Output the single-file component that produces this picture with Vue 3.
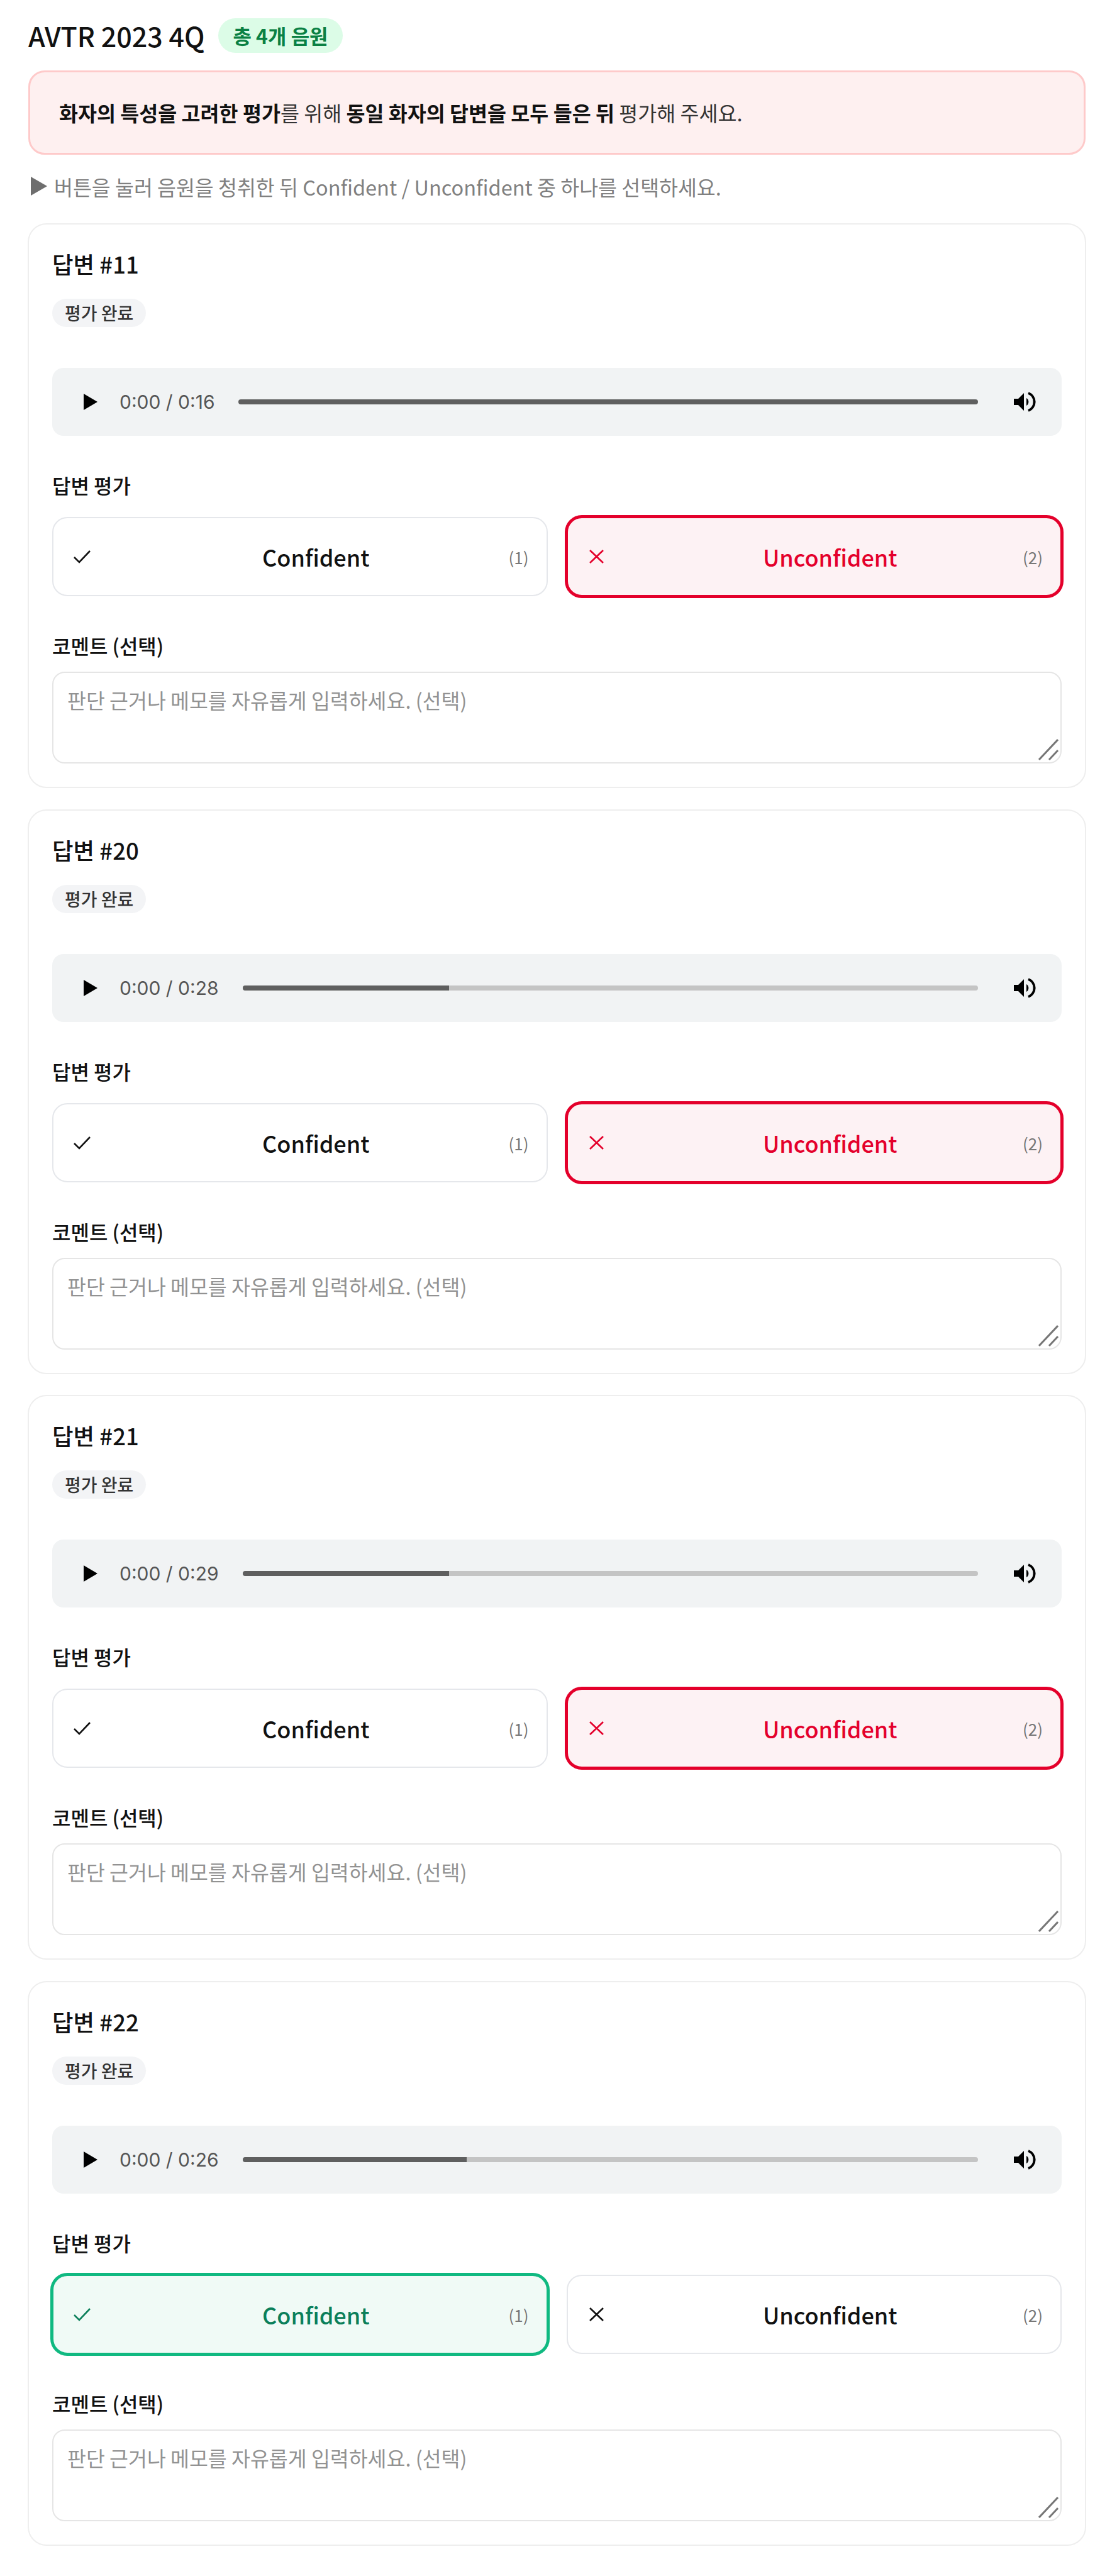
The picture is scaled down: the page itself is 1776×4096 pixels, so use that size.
<script setup>
const cards = [
  { id: 11, time: '0:16', played: 100, choice: 'un' },
  { id: 20, time: '0:28', played: 28.1, choice: 'un' },
  { id: 21, time: '0:29', played: 28.1, choice: 'un' },
  { id: 22, time: '0:26', played: 30.5, choice: 'conf' },
]
</script>

<template>
  <div class="page">
    <div class="head">
      <h1 class="title">AVTR 2023 4Q</h1>
      <span class="count">총 4개 음원</span>
    </div>
    <div class="alert">
      <b>화자의 특성을 고려한 평가</b>를 위해 <b>동일 화자의 답변을 모두 들은 뒤</b> 평가해 주세요.
    </div>
    <p class="hint"><span class="hint-arrow"></span>버튼을 눌러 음원을 청취한 뒤 Confident / Unconfident 중 하나를 선택하세요.</p>

    <section v-for="c in cards" :key="c.id" class="card">
      <h2 class="card-title">답변 #{{ c.id }}</h2>
      <span class="done">평가 완료</span>

      <div class="player">
        <svg class="play" viewBox="0 0 22 26"><polygon points="0,0 22,13 0,26" fill="#000" /></svg>
        <span class="time">0:00 / {{ c.time }}</span>
        <div class="track"><div class="fill" :style="{ width: c.played + '%' }"></div></div>
        <svg class="vol" viewBox="0 0 36 32">
          <polygon points="0,11 7,11 16,2 16,30 7,21 0,21" fill="#000" />
          <path d="M20 10 a7 7 0 0 1 0 12 z" fill="#000" />
          <path d="M23 2 a15 15 0 0 1 0 28" fill="none" stroke="#000" stroke-width="4" />
        </svg>
      </div>

      <div class="label first">답변 평가</div>
      <div class="choices">
        <button class="choice" :class="{ conf: c.choice === 'conf' }" type="button">
          <svg class="mark" viewBox="0 0 27 20"><path d="M1 11 L9 19 L26 1" fill="none" stroke="currentColor" stroke-width="2.6" /></svg>
          <span class="choice-text">Confident</span>
          <span class="key">(1)</span>
        </button>
        <button class="choice" :class="{ un: c.choice === 'un' }" type="button">
          <svg class="mark" viewBox="0 0 27 22"><path d="M3 1 L24 21 M24 1 L3 21" fill="none" stroke="currentColor" stroke-width="2.6" /></svg>
          <span class="choice-text">Unconfident</span>
          <span class="key">(2)</span>
        </button>
      </div>

      <div class="label second">코멘트 (선택)</div>
      <div class="area-wrap">
        <textarea class="area" placeholder="판단 근거나 메모를 자유롭게 입력하세요. (선택)"></textarea>
        <svg class="grip" viewBox="0 0 32 34"><path d="M1 33 L31 1 M17 33 L31 18" stroke="#777" stroke-width="3" fill="none" /></svg>
      </div>
    </section>
  </div>
</template>

<style scoped>
.page {
  box-sizing: border-box;
  width: 1776px;
  height: 4096px;
  padding: 29px 49px 0 44px;
  background: #fff;
  font-family: "Noto Sans CJK KR", "Noto Sans", sans-serif;
  color: #111;
}
.head { display: flex; align-items: center; gap: 22px; height: 55px; margin-left: 1px; }
.title { margin: 0; font-size: 43px; font-weight: 500; line-height: 55px; color: #111; }
.count {
  height: 55px; line-height: 55px; padding: 0 23px; border-radius: 28px;
  background: #dcfce7; color: #0a8043; font-size: 32px; font-weight: 700;
}
.alert {
  box-sizing: border-box; height: 134px; margin: 28px 1px 0; padding: 0 46px;
  line-height: 128px;
  background: #fef0f0; border: 3px solid #fecaca; border-radius: 26px;
  font-size: 32.6px; color: #333;
}
.alert b { font-weight: 700; color: #111; }
.hint {
  display: flex; align-items: center; margin: 30px 0 0 1px; height: 40px;
  font-size: 32.5px; color: #808080;
}
.hint-arrow {
  width: 0; height: 0; margin: 0 11px 0 4px;
  border-left: 26px solid #6e6e6e; border-top: 15px solid transparent; border-bottom: 15px solid transparent;
}
.card {
  box-sizing: border-box; height: 898px; margin-top: 33.5px; padding: 38px 37px 0;
  border: 2px solid #eeeeee; border-radius: 30px; background: #fff;
}
.hint + .card { margin-top: 39px; }
.card-title { margin: 0; font-size: 36.5px; font-weight: 500; line-height: 50px; color: #111; }
.done {
  display: inline-block; margin-top: 30px; height: 45px; line-height: 45px; padding: 0 20px;
  border-radius: 23px; background: #f3f4f6; color: #333; font-size: 28px; font-weight: 500;
}
.player {
  display: flex; align-items: center; height: 108px; margin-top: 65px; padding: 0 40px 0 50px;
  background: #f1f3f4; border-radius: 18px;
}
.play { width: 22px; height: 26px; flex: none; }
.time { margin-left: 35px; font-family: Inter, Roboto, sans-serif; font-size: 30px; color: #555; white-space: nowrap; }
.track { flex: 1; height: 8px; margin: 0 57px 0 38px; border-radius: 4px; background: #c4c4c4; overflow: hidden; }
.fill { height: 100%; background: #5f5f5f; }
.vol { width: 36px; height: 32px; flex: none; }
.label { font-size: 32px; font-weight: 500; line-height: 40px; color: #111; }
.first { margin-top: 58px; }
.second { margin-top: 58px; }
.choices { display: flex; gap: 30px; margin-top: 31px; }
.choice {
  position: relative; box-sizing: border-box; flex: 1; height: 126px; padding: 0 8px 0 32px;
  display: flex; align-items: center; background: #fff; border: 2px solid #e5e7eb; border-radius: 24px;
  font-family: inherit; color: #111;
}
.mark { width: 27px; height: 22px; flex: none; }
.choice-text { flex: 1; text-align: center; font-size: 36px; font-weight: 500; }
.key { position: absolute; right: 28px; top: 50%; transform: translateY(-50%); font-size: 26px; color: #777; }
.choice.un { background: #fdf2f4; border-color: #e4002b; box-shadow: 0 0 0 3px #e4002b; color: #e4002b; }
.choice.conf { background: #f0faf6; border-color: #10b981; box-shadow: 0 0 0 3px #10b981; color: #0b7f5a; }
.area-wrap { position: relative; margin-top: 22px; height: 146px; }
.area {
  display: block; box-sizing: border-box; width: 100%; height: 100%; padding: 21px 22px;
  border: 2px solid #e5e5e5; border-radius: 20px; background: #fff; resize: none; outline: none;
  font-family: inherit; font-size: 32.5px; line-height: 44px; color: #111;
}
.area::placeholder { color: #929292; opacity: 1; }
.grip { position: absolute; right: 5px; bottom: 5px; width: 32px; height: 34px; pointer-events: none; }
</style>
